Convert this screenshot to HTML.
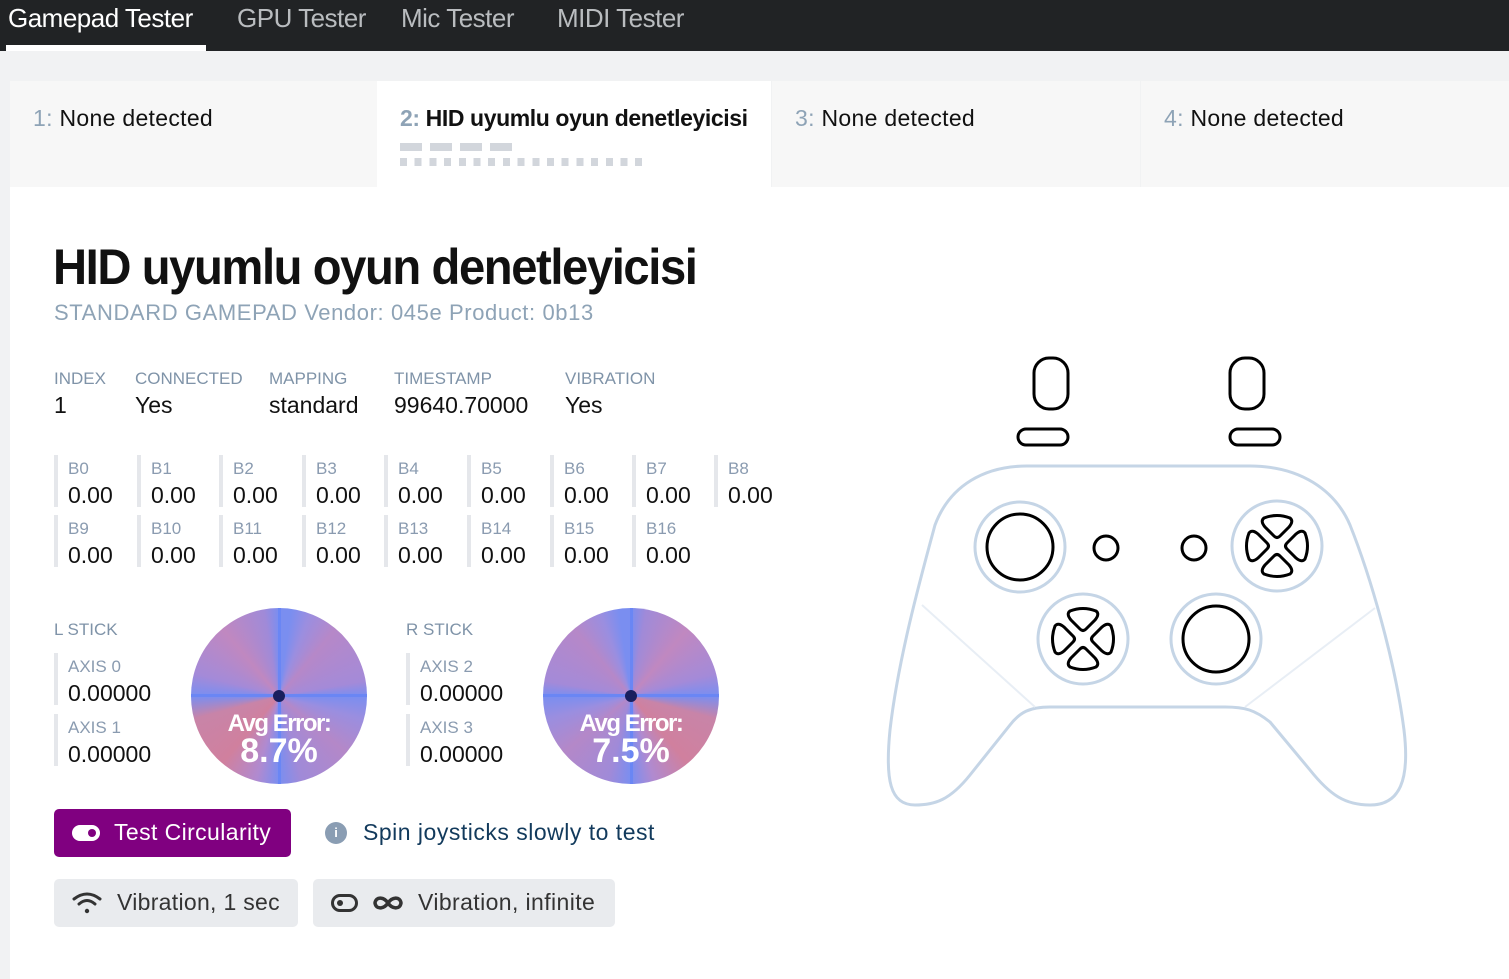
<!DOCTYPE html>
<html><head><meta charset="utf-8"><style>
*{margin:0;padding:0;box-sizing:border-box}
body{width:1509px;height:979px;overflow:hidden;background:#f1f2f3;font-family:"Liberation Sans",sans-serif;position:relative}
.a{position:absolute;white-space:nowrap}
.nav{left:0;top:0;width:1509px;height:51px;background:#212325}
.nav span{position:absolute;top:3px;font-size:26px;color:#b9bcbf;letter-spacing:-0.5px}
.tab{top:81px;height:106px;background:#f7f7f7}
.tab .t{position:absolute;left:23px;top:24px;font-size:23px;color:#111;letter-spacing:0.3px}
.tab .t b{color:#8ea3b6;font-weight:normal}
.lbl{font-size:17px;color:#7f93a8}
.val{font-size:23px;color:#111}
.btn{position:absolute;width:70px;height:52px;border-left:4px solid #e5e7eb}
.btn .l{position:absolute;left:10px;top:4px;font-size:17px;color:#8a9bb0}
.btn .v{position:absolute;left:10px;top:27px;font-size:23px;color:#111}
.gauge{width:176px;height:176px;border-radius:50%;background:conic-gradient(#7a8ef0 0deg,#7a8ef0 8deg,#9a8ee0 20deg,#b688c8 40deg,#a48ad8 80deg,#7a8ef0 90deg,#9a8ee0 105deg,#b488c8 130deg,#a08ad8 165deg,#7a8ef0 180deg,#b08ad0 195deg,#d0809e 220deg,#c884a8 255deg,#7a8ef0 270deg,#a48ad8 285deg,#c088c0 320deg,#a08ad8 350deg,#7a8ef0 360deg)}
.gtxt{color:#fff;font-weight:bold;text-align:center;width:176px;line-height:1}
</style></head><body>
<div class="a nav">
<span style="left:8px;color:#fff">Gamepad Tester</span>
<span style="left:237px">GPU Tester</span>
<span style="left:401px">Mic Tester</span>
<span style="left:557px">MIDI Tester</span>
<div class="a" style="left:6px;top:45px;width:200px;height:6px;background:#fff"></div>
</div>
<div class="a" style="left:10px;top:187px;width:1499px;height:792px;background:#fff"></div>
<div class="a tab" style="left:10px;width:367px"><div class="t"><b>1:</b> None detected</div></div>
<div class="a tab" style="left:377px;width:394px;background:#fff"><div class="t" style="font-weight:bold;letter-spacing:-0.4px"><b style="font-weight:bold">2:</b> HID uyumlu oyun denetleyicisi</div>
<div class="a" style="left:23px;top:62px;width:112px;height:8px;background:repeating-linear-gradient(90deg,#d2d6dc 0 22px,transparent 22px 30px)"></div>
<div class="a" style="left:23px;top:77px;width:250px;height:8px;background:repeating-linear-gradient(90deg,#d2d6dc 0 7px,transparent 7px 14.7px)"></div>
</div>
<div class="a tab" style="left:772px;width:368px"><div class="t"><b>3:</b> None detected</div></div>
<div class="a tab" style="left:1141px;width:368px"><div class="t"><b>4:</b> None detected</div></div>

<div class="a" style="left:53px;top:238px;font-size:50px;font-weight:bold;color:#111;letter-spacing:-1.5px;transform:scaleX(0.944);transform-origin:0 0">HID uyumlu oyun denetleyicisi</div>
<div class="a" style="left:54px;top:300px;font-size:22px;color:#8ea3b6;letter-spacing:0.6px">STANDARD GAMEPAD Vendor: 045e Product: 0b13</div>

<div class="a lbl" style="left:54px;top:369px">INDEX</div><div class="a val" style="left:54px;top:392px">1</div>
<div class="a lbl" style="left:135px;top:369px">CONNECTED</div><div class="a val" style="left:135px;top:392px">Yes</div>
<div class="a lbl" style="left:269px;top:369px">MAPPING</div><div class="a val" style="left:269px;top:392px">standard</div>
<div class="a lbl" style="left:394px;top:369px">TIMESTAMP</div><div class="a val" style="left:394px;top:392px">99640.70000</div>
<div class="a lbl" style="left:565px;top:369px">VIBRATION</div><div class="a val" style="left:565px;top:392px">Yes</div>

<div class="btn" style="left:54px;top:455px"><div class="l">B0</div><div class="v">0.00</div></div>
<div class="btn" style="left:137px;top:455px"><div class="l">B1</div><div class="v">0.00</div></div>
<div class="btn" style="left:219px;top:455px"><div class="l">B2</div><div class="v">0.00</div></div>
<div class="btn" style="left:302px;top:455px"><div class="l">B3</div><div class="v">0.00</div></div>
<div class="btn" style="left:384px;top:455px"><div class="l">B4</div><div class="v">0.00</div></div>
<div class="btn" style="left:467px;top:455px"><div class="l">B5</div><div class="v">0.00</div></div>
<div class="btn" style="left:550px;top:455px"><div class="l">B6</div><div class="v">0.00</div></div>
<div class="btn" style="left:632px;top:455px"><div class="l">B7</div><div class="v">0.00</div></div>
<div class="btn" style="left:714px;top:455px"><div class="l">B8</div><div class="v">0.00</div></div>
<div class="btn" style="left:54px;top:515px"><div class="l">B9</div><div class="v">0.00</div></div>
<div class="btn" style="left:137px;top:515px"><div class="l">B10</div><div class="v">0.00</div></div>
<div class="btn" style="left:219px;top:515px"><div class="l">B11</div><div class="v">0.00</div></div>
<div class="btn" style="left:302px;top:515px"><div class="l">B12</div><div class="v">0.00</div></div>
<div class="btn" style="left:384px;top:515px"><div class="l">B13</div><div class="v">0.00</div></div>
<div class="btn" style="left:467px;top:515px"><div class="l">B14</div><div class="v">0.00</div></div>
<div class="btn" style="left:550px;top:515px"><div class="l">B15</div><div class="v">0.00</div></div>
<div class="btn" style="left:632px;top:515px"><div class="l">B16</div><div class="v">0.00</div></div>

<div class="a lbl" style="left:54px;top:620px">L STICK</div>
<div class="btn" style="left:54px;top:653px;width:110px"><div class="l">AXIS 0</div><div class="v">0.00000</div></div>
<div class="btn" style="left:54px;top:714px;width:110px"><div class="l">AXIS 1</div><div class="v">0.00000</div></div>
<div class="a lbl" style="left:406px;top:620px">R STICK</div>
<div class="btn" style="left:406px;top:653px;width:110px"><div class="l">AXIS 2</div><div class="v">0.00000</div></div>
<div class="btn" style="left:406px;top:714px;width:110px"><div class="l">AXIS 3</div><div class="v">0.00000</div></div>

<div class="a gauge" style="left:191px;top:608px"></div>
<div class="a" style="left:191px;top:694px;width:176px;height:3px;background:#6a86f4"></div>
<div class="a" style="left:278px;top:608px;width:3px;height:176px;background:#6a86f4"></div>
<div class="a" style="left:273px;top:690px;width:12px;height:12px;border-radius:50%;background:#1a1f5e"></div>
<div class="a gtxt" style="left:191px;top:712px;font-size:24px;letter-spacing:-1.5px">Avg Error:</div>
<div class="a gtxt" style="left:191px;top:734px;font-size:34px">8.7%</div>

<div class="a gauge" style="left:543px;top:608px;transform:scaleX(-1)"></div>
<div class="a" style="left:543px;top:694px;width:176px;height:3px;background:#6a86f4"></div>
<div class="a" style="left:630px;top:608px;width:3px;height:176px;background:#6a86f4"></div>
<div class="a" style="left:625px;top:690px;width:12px;height:12px;border-radius:50%;background:#1a1f5e"></div>
<div class="a gtxt" style="left:543px;top:712px;font-size:24px;letter-spacing:-1.5px">Avg Error:</div>
<div class="a gtxt" style="left:543px;top:734px;font-size:34px">7.5%</div>

<div class="a" style="left:54px;top:809px;width:237px;height:48px;background:#800080;border-radius:5px">
<div class="a" style="left:18px;top:16px;width:28px;height:16px;border-radius:8px;background:#fff"></div>
<div class="a" style="left:34px;top:20px;width:8px;height:8px;border-radius:50%;background:#800080"></div>
<div class="a" style="left:60px;top:10px;font-size:23px;color:#fff;letter-spacing:0.4px">Test Circularity</div></div>
<div class="a" style="left:325px;top:822px;width:22px;height:22px;border-radius:50%;background:#8a9db3;color:#fff;font-size:13px;font-weight:bold;text-align:center;line-height:22px">i</div>
<div class="a" style="left:363px;top:819px;font-size:23px;color:#123a5c;letter-spacing:0.5px">Spin joysticks slowly to test</div>

<div class="a" style="left:54px;top:879px;width:244px;height:48px;background:#e9ebee;border-radius:5px">
<svg class="a" style="left:16px;top:11px" width="34" height="26" viewBox="0 0 34 26" fill="none" stroke="#333" stroke-width="3" stroke-linecap="round"><path d="M4 9 Q17 -1 30 9"/><path d="M9 14 Q17 7 25 14"/><circle cx="17" cy="21" r="2.2" fill="#333" stroke="none"/></svg>
<div class="a" style="left:63px;top:10px;font-size:23px;color:#333;letter-spacing:0.3px">Vibration, 1 sec</div></div>
<div class="a" style="left:313px;top:879px;width:302px;height:48px;background:#e9ebee;border-radius:5px">
<div class="a" style="left:18px;top:15px;width:27px;height:18px;border:3px solid #333;border-radius:9px"><div class="a" style="left:3px;top:3px;width:6px;height:6px;border-radius:50%;background:#333"></div></div>
<svg class="a" style="left:58px;top:14px" width="34" height="20" viewBox="0 0 34 20" fill="none" stroke="#333" stroke-width="3.5"><path d="M17 10 C13 4 5 3 4 10 C5 17 13 16 17 10 C21 4 29 3 30 10 C29 17 21 16 17 10Z"/></svg>
<div class="a" style="left:105px;top:10px;font-size:23px;color:#333;letter-spacing:0.4px">Vibration, infinite</div></div>

<svg class="a" style="left:0;top:0" width="1509" height="979" viewBox="0 0 1509 979" fill="none">
<g stroke="#c5d5e6" stroke-width="3">
<path d="M1027,466 L1250,466 C1300,466 1335,490 1350,525 C1370,575 1395,660 1404,730 C1410,780 1400,805 1370,805 C1345,805 1330,795 1310,770 L1270,722 C1255,710 1245,707 1225,707 L1050,707 C1030,707 1020,712 1010,725 L970,775 C950,800 935,805 915,805 C890,805 885,780 890,730 C898,660 920,580 935,525 C950,485 985,466 1027,466 Z"/>
<circle cx="1020" cy="547" r="45"/><circle cx="1277" cy="546" r="45"/><circle cx="1083" cy="639" r="45"/><circle cx="1216" cy="639" r="45"/>
</g>
<g stroke="#e8eef5" stroke-width="2"><path d="M922,605 L1035,707"/><path d="M1245,707 L1375,608"/></g>
<g stroke="#000" stroke-width="3">
<circle cx="1020" cy="547" r="33"/><circle cx="1216" cy="639" r="33"/>
<circle cx="1106" cy="548" r="12"/><circle cx="1194" cy="548" r="12"/>
<rect x="1034" y="358" width="34" height="51" rx="15"/><rect x="1018" y="429" width="50" height="16" rx="8"/>
<rect x="1230" y="358" width="34" height="51" rx="15"/><rect x="1230" y="429" width="50" height="16" rx="8"/>
</g>
<defs><path id="p" d="M-13,-28 Q0,-33 13,-28 Q17,-25 12,-19 L3,-10 Q0,-7 -3,-10 L-12,-19 Q-17,-25 -13,-28Z"/></defs>
<g stroke="#000" stroke-width="3" transform="translate(1277,546)"><use href="#p"/><use href="#p" transform="rotate(90)"/><use href="#p" transform="rotate(180)"/><use href="#p" transform="rotate(270)"/></g>
<g stroke="#000" stroke-width="3" transform="translate(1083,639)"><use href="#p"/><use href="#p" transform="rotate(90)"/><use href="#p" transform="rotate(180)"/><use href="#p" transform="rotate(270)"/></g>
</svg>
</body></html>
